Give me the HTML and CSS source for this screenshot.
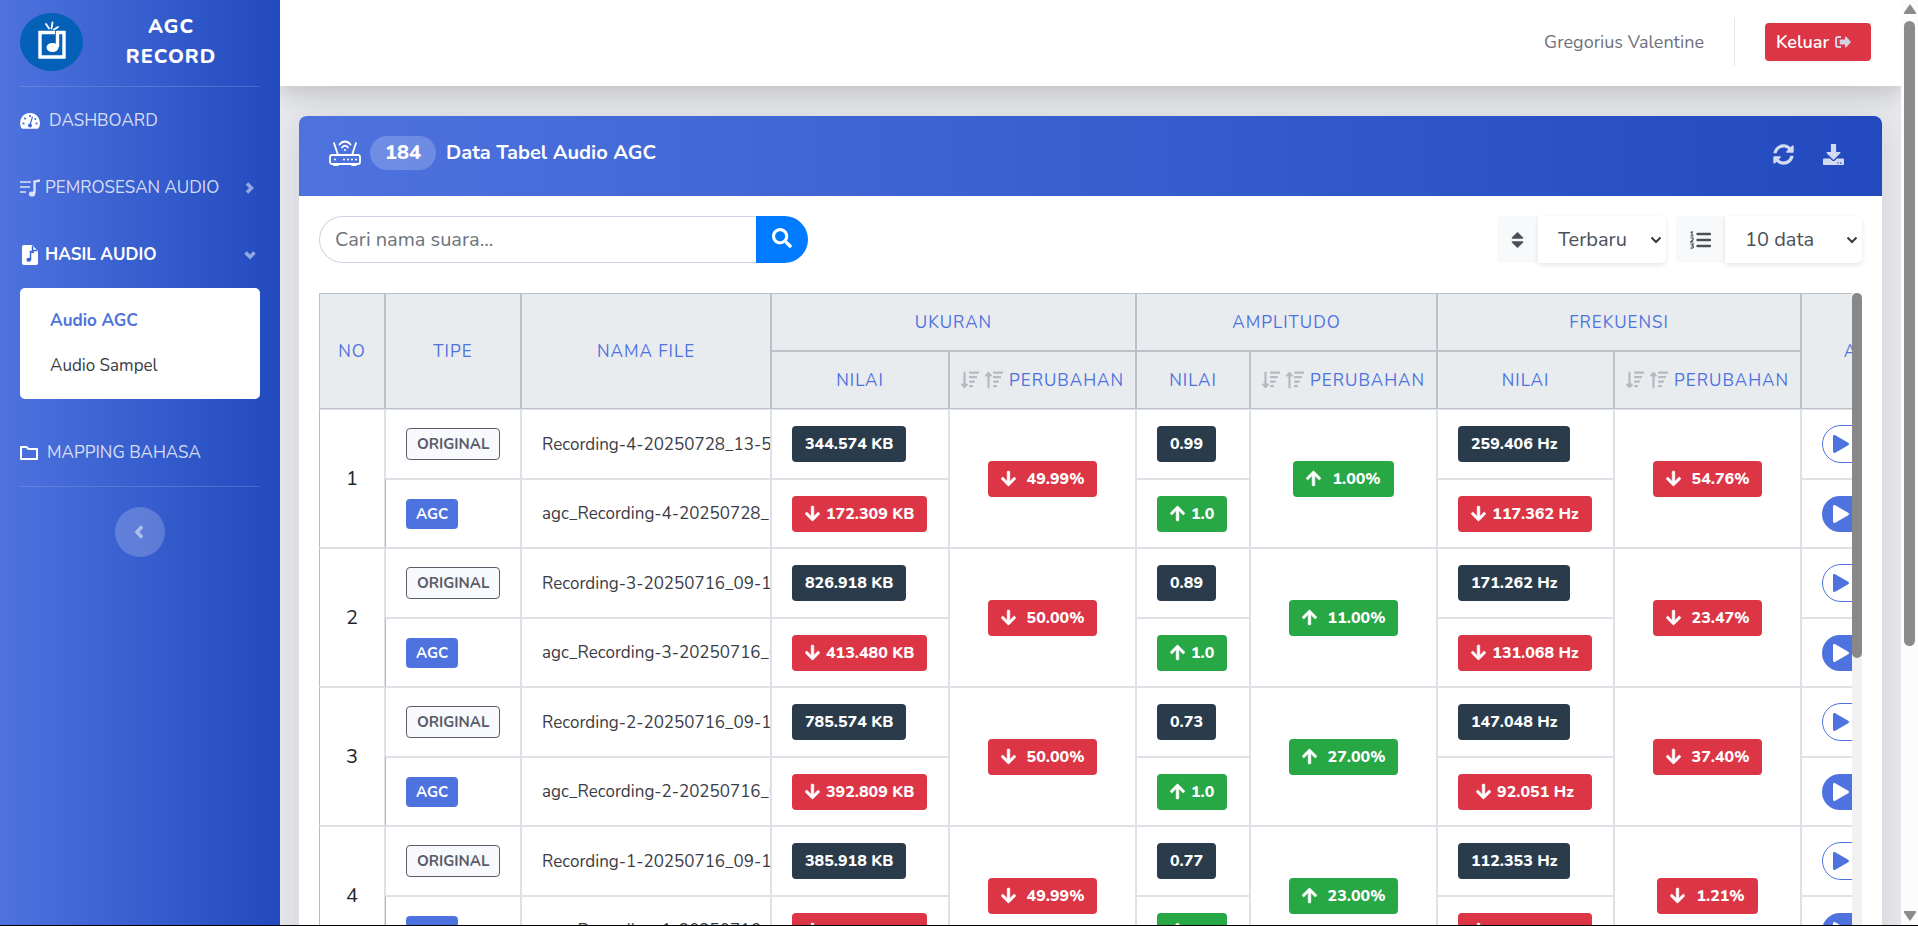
FILE: index.html
```
<!DOCTYPE html>
<html lang="id">
<head>
    <meta charset="UTF-8">
    <meta name="viewport" content="width=device-width, initial-scale=1.0">
    <title>AGC Record - Audio AGC</title>
    <link rel="stylesheet" href="styles.css">
</head>
<body>
    <!-- Ikon yang dipakai berulang -->
    <svg class="sprite" aria-hidden="true">
        <symbol id="i-down" viewBox="0 0 448 512"><path d="M413.1 222.5l22.2 22.2c9.4 9.4 9.4 24.6 0 33.9L241 473c-9.4 9.4-24.6 9.4-33.9 0L12.7 278.6c-9.4-9.4-9.4-24.6 0-33.9l22.2-22.2c9.5-9.5 25-9.3 34.3.4L184 343.4V56c0-13.3 10.7-24 24-24h32c13.3 0 24 10.7 24 24v287.4l114.8-120.5c9.3-9.8 24.8-10 34.3-.4z"/></symbol>
        <symbol id="i-up" viewBox="0 0 448 512"><path transform="matrix(1 0 0 -1 0 512)" d="M413.1 222.5l22.2 22.2c9.4 9.4 9.4 24.6 0 33.9L241 473c-9.4 9.4-24.6 9.4-33.9 0L12.7 278.6c-9.4-9.4-9.4-24.6 0-33.9l22.2-22.2c9.5-9.5 25-9.3 34.3.4L184 343.4V56c0-13.3 10.7-24 24-24h32c13.3 0 24 10.7 24 24v287.4l114.8-120.5c9.3-9.8 24.8-10 34.3-.4z"/></symbol>
        <symbol id="i-play" viewBox="0 0 16 18"><path d="M0 1.5C0 .3 1.2-.3 2.200.3l13 7.500c1 .6 1 1.800 0 2.400l-13 7.500C1.200 18.300 0 17.700 0 16.500z"/></symbol>
        <symbol id="i-sort-down" viewBox="0 0 18 18"><path d="M3.500 1.500V15M1.200 13.500h4.600L3.500 16zM9 1.700h8M9 6.200h6M9 10.700h4M9 15.200h2" fill="none" stroke="currentColor" stroke-width="2.200" stroke-linecap="round" stroke-linejoin="round"/></symbol>
        <symbol id="i-sort-up" viewBox="0 0 18 18"><path d="M3.500 3v13.500M1.200 4.500h4.600L3.500 2zM9 1.700h8M9 6.200h6M9 10.700h4M9 15.200h2" fill="none" stroke="currentColor" stroke-width="2.200" stroke-linecap="round" stroke-linejoin="round"/></symbol>
    </svg>

    <div class="wrapper">
        <nav class="sidebar">
            <a class="brand" href="#">
                <svg class="brand-logo" viewBox="0 0 63 58">
                    <ellipse cx="31.500" cy="29" rx="31.500" ry="29" fill="#0561b8"/>
                    <g fill="none" stroke="#fff">
                        <path d="M35 19.500H20V44h24V19.500h-6.500V34" stroke-width="3.400"/>
                        <path d="M26 11l3 4.500M32.500 9.500l-1 6M38 14l-4 2.500" stroke-width="1.800" stroke-linecap="round"/>
                    </g>
                    <ellipse cx="32.500" cy="34.500" rx="6" ry="4.500" fill="#fff"/>
                </svg>
                <span class="brand-text">AGC RECORD</span>
            </a>
            <ul class="menu">
                <li><a class="menu-link" href="#">
                    <svg width="20" height="16" viewBox="0 0 20 16"><path fill="#fff" d="M10 0A10 10 0 0 0 1.400 15c.3.500.700.700 1.200.700h14.800c.5 0 .9-.2 1.200-.7A10 10 0 0 0 10 0z"/><g fill="#4069d8"><circle cx="3.500" cy="10.500" r="1.100"/><circle cx="5" cy="5.500" r="1.100"/><circle cx="10" cy="3" r="1.100"/><circle cx="16.500" cy="10.500" r="1.100"/><circle cx="15.300" cy="6" r="1"/></g><path d="M12.500 3.800L10.300 11" stroke="#4069d8" stroke-width="1.200"/><circle cx="10" cy="12.500" r="2" fill="#4069d8"/></svg>
                    <span>DASHBOARD</span></a></li>
                <li><a class="menu-link tight" href="#">
                    <svg width="20" height="18" viewBox="0 0 20 18"><path d="M0 3h11M0 8h10M0 13h6" stroke="currentColor" stroke-width="1.500"/><path d="M14.500 14V2.500L20 1.500" fill="none" stroke="currentColor" stroke-width="2.400"/><ellipse cx="12" cy="15" rx="3.200" ry="2.600" fill="currentColor"/></svg>
                    <span>PEMROSESAN AUDIO</span>
                    <svg class="caret" width="12" height="12" viewBox="0 0 12 12"><path d="M3 1.500L7.500 6 3 10.500"/></svg></a></li>
                <li><a class="menu-link tight active" href="#">
                    <svg width="20" height="20" viewBox="0 0 20 20"><path fill="#fff" d="M4 0h8l6 6v12a2 2 0 0 1-2 2H4a2 2 0 0 1-2-2V2a2 2 0 0 1 2-2z"/><path d="M10.500 14.500V6.500l3.500 1M12.500 1v4.500H17" fill="none" stroke="#3b63d3" stroke-width="1.500"/><ellipse cx="8.800" cy="14.800" rx="2.400" ry="2" fill="#3b63d3"/></svg>
                    <span>HASIL AUDIO</span>
                    <svg class="caret" width="12" height="12" viewBox="0 0 12 12"><path d="M1.500 3.500L6 8l4.500-4.500"/></svg></a>
                    <div class="submenu">
                        <a class="selected" href="#">Audio AGC</a>
                        <a href="#">Audio Sampel</a>
                    </div></li>
                <li><a class="menu-link" href="#">
                    <svg width="18" height="14" viewBox="0 0 18 14"><path d="M1 1h5.500l2 2H17v10H1z" fill="none" stroke="#fff" stroke-width="2" stroke-linejoin="round"/></svg>
                    <span>MAPPING BAHASA</span></a></li>
            </ul>
            <button class="toggle" type="button" aria-label="Ciutkan menu"><svg class="caret" width="14" height="14" viewBox="0 0 14 14"><path d="M9 1.500L4 7l5 5.500"/></svg></button>
        </nav>

        <div class="content">
            <header class="topbar">
                <span class="user">Gregorius Valentine</span>
                <span class="divider"></span>
                <button class="logout" type="button">Keluar
                    <svg width="16" height="12" viewBox="0 0 16 12"><path d="M6 1H3a2 2 0 0 0-2 2v6a2 2 0 0 0 2 2h3" fill="none" stroke="currentColor" stroke-width="2"/><path d="M10 1.200c0-.8.800-1 1.300-.5l4.300 4.700c.4.400.4.800 0 1.200l-4.300 4.700c-.5.500-1.300.3-1.300-.5V8.500H5.500c-.5 0-.8-.3-.8-.8V4.300c0-.5.3-.8.8-.8H10z" fill="currentColor"/></svg>
                </button>
            </header>

            <main class="card">
                <div class="card-header">
                    <svg class="line" width="32" height="26" viewBox="0 0 32 26" stroke="#fff" stroke-width="1.800" stroke-linecap="round"><rect x="1" y="15" width="30" height="9" rx="2"/><path d="M5 3l4 12M27 3l-4 12M10.500 4.500c3-4 8-4 11 0M13 7.500c2-2.500 4-2.500 6 0M5 25h4M23 25h4"/><path d="M16 10v.1M6 19.500v.1M15 19.500v.1M19 19.500v.1M23 19.500v.1M27 19.500v.1" stroke-width="2"/></svg>
                    <span class="count">184</span>
                    <h1>Data Tabel Audio AGC</h1>
                    <button class="tool" type="button" aria-label="Muat ulang"><svg width="21" height="21" viewBox="0 0 512 512"><path d="M370.720 133.280C339.458 104.008 298.888 87.962 255.848 88c-77.458.068-144.328 53.178-162.791 126.850-1.344 5.363-6.122 9.150-11.651 9.150H24.103c-7.498 0-13.194-6.807-11.807-14.176C33.933 94.924 134.813 8 256 8c66.448 0 126.791 26.136 171.315 68.685L463.030 40.970C478.149 25.851 504 36.559 504 57.941V192c0 13.255-10.745 24-24 24H345.941c-21.382 0-32.090-25.851-16.971-40.971l41.750-41.749zM32 296h134.059c21.382 0 32.090 25.851 16.971 40.971l-41.750 41.750c31.262 29.273 71.835 45.319 114.876 45.280 77.418-.070 144.315-53.144 162.787-126.849 1.344-5.363 6.122-9.150 11.651-9.150h57.304c7.498 0 13.194 6.807 11.807 14.176C478.067 417.076 377.187 504 256 504c-66.448 0-126.791-26.136-171.315-68.685L48.970 471.030C33.851 486.149 8 475.441 8 454.059V320c0-13.255 10.745-24 24-24z"/></svg></button>
                    <button class="tool" type="button" aria-label="Unduh"><svg width="21" height="21" viewBox="0 0 512 512"><path d="M216 0h80c13.300 0 24 10.700 24 24v168h87.700c17.800 0 26.700 21.500 14.100 34.100L269.700 378.300c-7.500 7.500-19.800 7.500-27.300 0L90.100 226.100c-12.600-12.600-3.700-34.100 14.100-34.100H192V24c0-13.300 10.700-24 24-24zm296 376v112c0 13.300-10.700 24-24 24H24c-13.300 0-24-10.700-24-24V376c0-13.300 10.700-24 24-24h146.700l49 49c20.100 20.100 52.500 20.100 72.600 0l49-49H488c13.300 0 24 10.700 24 24zm-124 88c0-11-9-20-20-20s-20 9-20 20 9 20 20 20 20-9 20-20zm64 0c0-11-9-20-20-20s-20 9-20 20 9 20 20 20 20-9 20-20z"/></svg></button>
                </div>
                <div class="card-body">
                    <div class="filters">
                        <form class="search">
                            <input type="text" placeholder="Cari nama suara..." aria-label="Cari nama suara">
                            <button type="button" aria-label="Cari"><svg width="20" height="20" viewBox="0 0 512 512"><path d="M505 442.700L405.300 343c-4.500-4.500-10.600-7-17-7H372c27.600-35.300 44-79.700 44-128C416 93.100 322.900 0 208 0S0 93.100 0 208s93.100 208 208 208c48.300 0 92.700-16.400 128-44v16.300c0 6.400 2.500 12.500 7 17l99.700 99.700c9.400 9.400 24.600 9.400 33.900 0l28.300-28.300c9.400-9.400 9.400-24.600.1-34zM208 336c-70.700 0-128-57.200-128-128 0-70.700 57.200-128 128-128 70.700 0 128 57.200 128 128 0 70.700-57.200 128-128 128z"/></svg></button>
                        </form>
                        <div class="picker">
                            <label for="urutan" aria-label="Urutan"><svg width="13" height="16" viewBox="0 0 12 16"><path d="M6 0l5.600 5.600c.5.500.2 1.200-.5 1.200H.9c-.7 0-1-.7-.5-1.200zM6 16l5.600-5.600c.5-.5.2-1.200-.5-1.200H.9c-.7 0-1 .7-.5 1.200z"/></svg></label>
                            <select id="urutan" class="order"><option>Terbaru</option><option>Terlama</option></select>
                        </div>
                        <div class="picker">
                            <label for="jumlah" aria-label="Jumlah data"><svg class="line" width="21" height="18" viewBox="0 0 21 18" stroke="currentColor"><path d="M7.500 3h12.500M7.500 9h12.500M7.500 15h12.500" stroke-width="2.400" stroke-linecap="round"/><path d="M.5 1.500L2 .8V5M.5 5h3M.5 7h2.500v1.800L.7 11H3.500M.5 13h2.800L2 14.800c2 0 2 2.400-.2 2.400H.5" stroke-width="1.200"/></svg></label>
                            <select id="jumlah" class="amount"><option>10 data</option><option>25 data</option></select>
                        </div>
                    </div>

                    <div class="table-area">
                        <div class="table-wrap">
                            <table>
                                <colgroup>
                                    <col class="c-no"><col class="c-tipe"><col class="c-file">
                                    <col class="c-size"><col class="c-change"><col class="c-amp"><col class="c-change">
                                    <col class="c-freq"><col class="c-change"><col class="c-aksi">
                                </colgroup>
                                <thead>
                                    <tr>
                                        <th rowspan="2">NO</th><th rowspan="2">TIPE</th><th rowspan="2">NAMA FILE</th>
                                        <th colspan="2">UKURAN</th><th colspan="2">AMPLITUDO</th><th colspan="2">FREKUENSI</th>
                                        <th rowspan="2">AKSI</th>
                                    </tr>
                                    <tr>
                                        <th>NILAI</th>
                                        <th><span class="sortable"><svg><use href="#i-sort-down"/></svg><svg><use href="#i-sort-up"/></svg>PERUBAHAN</span></th>
                                        <th>NILAI</th>
                                        <th><span class="sortable"><svg><use href="#i-sort-down"/></svg><svg><use href="#i-sort-up"/></svg>PERUBAHAN</span></th>
                                        <th>NILAI</th>
                                        <th><span class="sortable"><svg><use href="#i-sort-down"/></svg><svg><use href="#i-sort-up"/></svg>PERUBAHAN</span></th>
                                    </tr>
                                </thead>
                                <tbody>
                                    <tr class="row-original">
                                        <td class="no" rowspan="2">1</td>
                                        <td><span class="type original">ORIGINAL</span></td>
                                        <td class="file">Recording-4-20250728_13-55-02.wav</td>
                                        <td><span class="badge dark">344.574 KB</span></td>
                                        <td class="change" rowspan="2"><span class="badge red"><svg><use href="#i-down"/></svg>49.99%</span></td>
                                        <td><span class="badge dark">0.99</span></td>
                                        <td class="change" rowspan="2"><span class="badge green"><svg><use href="#i-up"/></svg>1.00%</span></td>
                                        <td><span class="badge dark">259.406 Hz</span></td>
                                        <td class="change" rowspan="2"><span class="badge red"><svg><use href="#i-down"/></svg>54.76%</span></td>
                                        <td><button class="play outline" type="button" aria-label="Putar"><svg><use href="#i-play"/></svg></button></td>
                                    </tr>
                                    <tr class="row-agc">
                                        <td><span class="type agc">AGC</span></td>
                                        <td class="file">agc_Recording-4-20250728_13-55-02.wav</td>
                                        <td><span class="badge red"><svg><use href="#i-down"/></svg>172.309 KB</span></td>
                                        <td><span class="badge green"><svg><use href="#i-up"/></svg>1.0</span></td>
                                        <td><span class="badge red"><svg><use href="#i-down"/></svg>117.362 Hz</span></td>
                                        <td><button class="play" type="button" aria-label="Putar"><svg><use href="#i-play"/></svg></button></td>
                                    </tr>
                                    <tr class="row-original">
                                        <td class="no" rowspan="2">2</td>
                                        <td><span class="type original">ORIGINAL</span></td>
                                        <td class="file">Recording-3-20250716_09-19-40.wav</td>
                                        <td><span class="badge dark">826.918 KB</span></td>
                                        <td class="change" rowspan="2"><span class="badge red"><svg><use href="#i-down"/></svg>50.00%</span></td>
                                        <td><span class="badge dark">0.89</span></td>
                                        <td class="change" rowspan="2"><span class="badge green"><svg><use href="#i-up"/></svg>11.00%</span></td>
                                        <td><span class="badge dark">171.262 Hz</span></td>
                                        <td class="change" rowspan="2"><span class="badge red"><svg><use href="#i-down"/></svg>23.47%</span></td>
                                        <td><button class="play outline" type="button" aria-label="Putar"><svg><use href="#i-play"/></svg></button></td>
                                    </tr>
                                    <tr class="row-agc">
                                        <td><span class="type agc">AGC</span></td>
                                        <td class="file">agc_Recording-3-20250716_09-19-40.wav</td>
                                        <td><span class="badge red"><svg><use href="#i-down"/></svg>413.480 KB</span></td>
                                        <td><span class="badge green"><svg><use href="#i-up"/></svg>1.0</span></td>
                                        <td><span class="badge red"><svg><use href="#i-down"/></svg>131.068 Hz</span></td>
                                        <td><button class="play" type="button" aria-label="Putar"><svg><use href="#i-play"/></svg></button></td>
                                    </tr>
                                    <tr class="row-original">
                                        <td class="no" rowspan="2">3</td>
                                        <td><span class="type original">ORIGINAL</span></td>
                                        <td class="file">Recording-2-20250716_09-17-12.wav</td>
                                        <td><span class="badge dark">785.574 KB</span></td>
                                        <td class="change" rowspan="2"><span class="badge red"><svg><use href="#i-down"/></svg>50.00%</span></td>
                                        <td><span class="badge dark">0.73</span></td>
                                        <td class="change" rowspan="2"><span class="badge green"><svg><use href="#i-up"/></svg>27.00%</span></td>
                                        <td><span class="badge dark">147.048 Hz</span></td>
                                        <td class="change" rowspan="2"><span class="badge red"><svg><use href="#i-down"/></svg>37.40%</span></td>
                                        <td><button class="play outline" type="button" aria-label="Putar"><svg><use href="#i-play"/></svg></button></td>
                                    </tr>
                                    <tr class="row-agc">
                                        <td><span class="type agc">AGC</span></td>
                                        <td class="file">agc_Recording-2-20250716_09-17-12.wav</td>
                                        <td><span class="badge red"><svg><use href="#i-down"/></svg>392.809 KB</span></td>
                                        <td><span class="badge green"><svg><use href="#i-up"/></svg>1.0</span></td>
                                        <td><span class="badge red"><svg><use href="#i-down"/></svg>92.051 Hz</span></td>
                                        <td><button class="play" type="button" aria-label="Putar"><svg><use href="#i-play"/></svg></button></td>
                                    </tr>
                                    <tr class="row-original">
                                        <td class="no" rowspan="2">4</td>
                                        <td><span class="type original">ORIGINAL</span></td>
                                        <td class="file">Recording-1-20250716_09-15-33.wav</td>
                                        <td><span class="badge dark">385.918 KB</span></td>
                                        <td class="change" rowspan="2"><span class="badge red"><svg><use href="#i-down"/></svg>49.99%</span></td>
                                        <td><span class="badge dark">0.77</span></td>
                                        <td class="change" rowspan="2"><span class="badge green"><svg><use href="#i-up"/></svg>23.00%</span></td>
                                        <td><span class="badge dark">112.353 Hz</span></td>
                                        <td class="change" rowspan="2"><span class="badge red"><svg><use href="#i-down"/></svg>1.21%</span></td>
                                        <td><button class="play outline" type="button" aria-label="Putar"><svg><use href="#i-play"/></svg></button></td>
                                    </tr>
                                    <tr class="row-agc">
                                        <td><span class="type agc">AGC</span></td>
                                        <td class="file">agc_Recording-1-20250716_09-15-33.wav</td>
                                        <td><span class="badge red"><svg><use href="#i-down"/></svg>192.988 KB</span></td>
                                        <td><span class="badge green"><svg><use href="#i-up"/></svg>1.0</span></td>
                                        <td><span class="badge red"><svg><use href="#i-down"/></svg>110.995 Hz</span></td>
                                        <td><button class="play" type="button" aria-label="Putar"><svg><use href="#i-play"/></svg></button></td>
                                    </tr>
                                </tbody>
                            </table>
                        </div>
                        <div class="table-scroll"><div class="thumb"></div></div>
                    </div>
                </div>
            </main>
        </div>

        <div class="page-scroll">
            <svg width="14" height="12" viewBox="0 0 14 12"><path d="M7 1l6 8.500c.3.700 0 1.500-.8 1.500H1.800c-.8 0-1.100-.8-.8-1.500z"/></svg>
            <div class="thumb"></div>
            <svg class="end" width="14" height="12" viewBox="0 0 14 12"><path d="M7 11l6-8.500c.3-.7 0-1.500-.8-1.500H1.800C1 1 .7 1.800 1 2.500z"/></svg>
        </div>
    </div>
</body>
</html>
```
FILE: styles.css
```
* {
    margin: 0;
    padding: 0;
    box-sizing: border-box;
}
body {
    font-family: Nunito, "Open Sans", sans-serif;
    font-size: 17px;
    color: #212529;
    background-color: #e9eaee;
}
button, input, select {
    font-family: inherit;
    border: none;
}
button {
    cursor: pointer;
}
a {
    text-decoration: none;
}
svg {
    flex: none;
    fill: currentColor;
}
.line {
    fill: none;
}
.sprite {
    display: none;
}
.wrapper {
    display: flex;
    height: 100vh;
    overflow: hidden;
    border-bottom: 1px solid #000;
}

/* Sidebar */
.sidebar {
    flex: none;
    width: 280px;
    padding: 0 20px;
    background: linear-gradient(90deg, #4e73df, #224abe);
    position: relative;
    z-index: 2;
}
.brand {
    display: flex;
    align-items: center;
    height: 87px;
    padding-bottom: 3px;
    border-bottom: 1px solid rgba(255, 255, 255, 0.15);
    color: white;
}
.brand-logo {
    width: 63px;
    height: 58px;
}
.brand-text {
    width: 110px;
    margin-left: 33px;
    font-size: 20px;
    font-weight: 800;
    line-height: 30px;
    letter-spacing: 1px;
    text-align: center;
}
.menu {
    list-style: none;
    border-bottom: 1px solid rgba(255, 255, 255, 0.15);
}
.menu-link {
    display: flex;
    align-items: center;
    gap: 9px;
    height: 67px;
    color: rgba(255, 255, 255, 0.8);
}
.menu-link.tight {
    gap: 5px;
}
.menu-link.active {
    color: white;
    font-weight: 700;
}
.caret {
    fill: none;
    stroke: rgba(255, 255, 255, 0.5);
    stroke-width: 3.5;
}
.menu-link .caret {
    margin: 0 4px 0 auto;
}
.submenu {
    display: flex;
    flex-direction: column;
    padding: 10px 8px 11px;
    margin-bottom: 20px;
    background: white;
    border-radius: 5px;
}
.submenu a {
    padding: 0 22px;
    line-height: 45px;
    color: #3a3b45;
}
.submenu .selected {
    color: #4e73df;
    font-weight: 700;
}
.toggle {
    display: flex;
    align-items: center;
    justify-content: center;
    width: 50px;
    height: 50px;
    margin: 20px auto;
    border-radius: 50%;
    background: rgba(255, 255, 255, 0.2);
}

/* Konten */
.content {
    flex: 1;
    min-width: 0;
}
.topbar {
    display: flex;
    align-items: center;
    justify-content: flex-end;
    height: 86px;
    padding: 0 30px 2px;
    background: white;
    box-shadow: 0 10px 20px rgba(0, 0, 0, 0.15);
    position: relative;
}
.user {
    font-size: 18px;
    color: #6e707e;
}
.divider {
    width: 1px;
    height: 48px;
    margin: 0 30px;
    background: #e3e6f0;
}
.logout {
    display: flex;
    align-items: center;
    gap: 6px;
    width: 106px;
    height: 38px;
    padding: 0 11px;
    font-size: 18px;
    font-weight: 600;
    color: white;
    background: #dc3545;
    border-radius: 4px;
}
.logout svg {
    color: #d1d3e2;
}
.card {
    margin: 30px 19px 0;
    background: white;
    border-radius: 10px;
    box-shadow: 0 3px 35px rgba(58, 59, 69, 0.15);
}
.card-header {
    display: flex;
    align-items: center;
    height: 80px;
    padding: 0 38px 6px 30px;
    color: white;
    background: linear-gradient(90deg, #4e73df, #224abe);
    border-radius: 8px 8px 0 0;
}
.count {
    margin: 0 10px 0 9px;
    padding: 0 15px;
    font-size: 20px;
    font-weight: 800;
    line-height: 34px;
    border-radius: 17px;
    background: rgba(255, 255, 255, 0.2);
}
h1 {
    flex: 1;
    padding-bottom: 2px;
    font-size: 20px;
    font-weight: 700;
}
.tool {
    display: flex;
    margin: 3px 0 0 29px;
    color: rgba(255, 255, 255, 0.8);
    background: none;
}
.card-body {
    padding: 20px;
}
.filters {
    display: flex;
    gap: 10px;
    margin-bottom: 30px;
}
.search {
    display: flex;
    width: 489px;
    height: 47px;
    margin-right: auto;
}
.search input {
    flex: 1;
    min-width: 0;
    padding: 0 15px;
    font-size: 20px;
    border: 1px solid #d1d3e2;
    border-right: none;
    border-radius: 24px 0 0 24px;
}
.search input::placeholder {
    color: #6c757d;
}
.search button {
    width: 52px;
    padding-bottom: 4px;
    color: white;
    background: #007bff;
    border-radius: 0 24px 24px 0;
}
.search button svg {
    vertical-align: middle;
}
.picker {
    display: flex;
    height: 47px;
}
.picker label {
    display: flex;
    align-items: center;
    padding: 0 14px;
    color: #495057;
    background: #f8f9fa;
    border-radius: 5px 0 0 5px;
}
.picker select {
    appearance: none;
    padding: 0 20px;
    font-size: 20px;
    color: #495057;
    background: white url("data:image/svg+xml,%3Csvg xmlns='http://www.w3.org/2000/svg' width='12' height='8'%3E%3Cpath d='M1.500 1.500L6 6l4.500-4.500' fill='none' stroke='%23343a40' stroke-width='2'/%3E%3C/svg%3E") no-repeat right 4px center;
    border-radius: 0 5px 5px 0;
    box-shadow: 0 2px 5px rgba(0, 0, 0, 0.1);
}
.order {
    width: 128px;
}
.amount {
    width: 137px;
}

/* Tabel */
.table-area {
    display: flex;
}
.table-wrap {
    flex: 1;
    overflow: hidden;
}
table {
    width: 1609px;
    table-layout: fixed;
    border-collapse: separate;
    border-spacing: 0;
}
.c-no { width: 66px; }
.c-tipe { width: 136px; }
.c-file { width: 250px; }
.c-size { width: 178px; }
.c-change { width: 187px; }
.c-amp { width: 114px; }
.c-freq { width: 177px; }
.c-aksi { width: 127px; }
th {
    height: 58px;
    font-weight: 400;
    letter-spacing: 1px;
    color: #4e73df;
    background: #e9ecef;
    border: 1px solid #bcc2c9;
}
.sortable {
    display: flex;
    align-items: center;
    justify-content: center;
}
.sortable svg {
    width: 18px;
    height: 18px;
    margin-right: 6px;
    color: #b3bac1;
}
td {
    padding: 0 20px;
    border: 1px solid #dee2e6;
    vertical-align: middle;
}
td:first-child {
    border-left-color: #b3bac1;
}
.row-original {
    height: 70px;
}
.row-agc {
    height: 69px;
}
.no, .change {
    padding: 0;
    text-align: center;
}
.no {
    font-size: 20px;
}
.file {
    padding-right: 0;
    overflow: hidden;
    white-space: nowrap;
    color: #3a3b45;
}
.type {
    display: inline-block;
    padding: 0 10px;
    font-size: 15px;
    font-weight: 700;
    line-height: 30px;
    border-radius: 4px;
}
.original {
    color: #5a5c69;
    background: #f8f9fc;
    border: 1px solid #5a5c69;
}
.agc {
    color: white;
    background: #4e73df;
}
.badge {
    display: inline-flex;
    align-items: center;
    justify-content: center;
    gap: 6px;
    height: 36px;
    padding: 0 13px;
    font-size: 16px;
    font-weight: 800;
    white-space: nowrap;
    color: white;
    border-radius: 4px;
    vertical-align: middle;
}
.badge svg {
    width: 15px;
    height: 17px;
    stroke: currentColor;
    stroke-width: 16;
}
.change .badge {
    gap: 11px;
}
.row-agc .red {
    min-width: 134px;
}
.dark {
    background: #2a3b4c;
}
.red {
    background: #dc3545;
}
.green {
    background: #28a745;
}
.play {
    display: flex;
    align-items: center;
    width: 84px;
    height: 36px;
    padding: 0 11px;
    color: white;
    background: #4e73df;
    border-radius: 19px;
}
.play svg {
    width: 16px;
    height: 18px;
}
.play.outline {
    height: 38px;
    padding: 0 10px;
    color: #4e73df;
    background: white;
    border: 1px solid #4e73df;
}

/* Scrollbar */
.table-scroll {
    flex: none;
    width: 10px;
    background: #f1f1f1;
}
.table-scroll .thumb {
    height: 365px;
    background: #888;
    border-radius: 5px;
}
.page-scroll {
    display: flex;
    flex-direction: column;
    align-items: center;
    flex: none;
    width: 17px;
    padding: 3px 0;
    color: #8b8b8b;
    background: #fcfcfc;
    position: relative;
}
.page-scroll .thumb {
    width: 11px;
    height: 68%;
    margin-top: 6px;
    background: #8b8b8b;
    border-radius: 6px;
}
.page-scroll .end {
    margin-top: auto;
}
```
